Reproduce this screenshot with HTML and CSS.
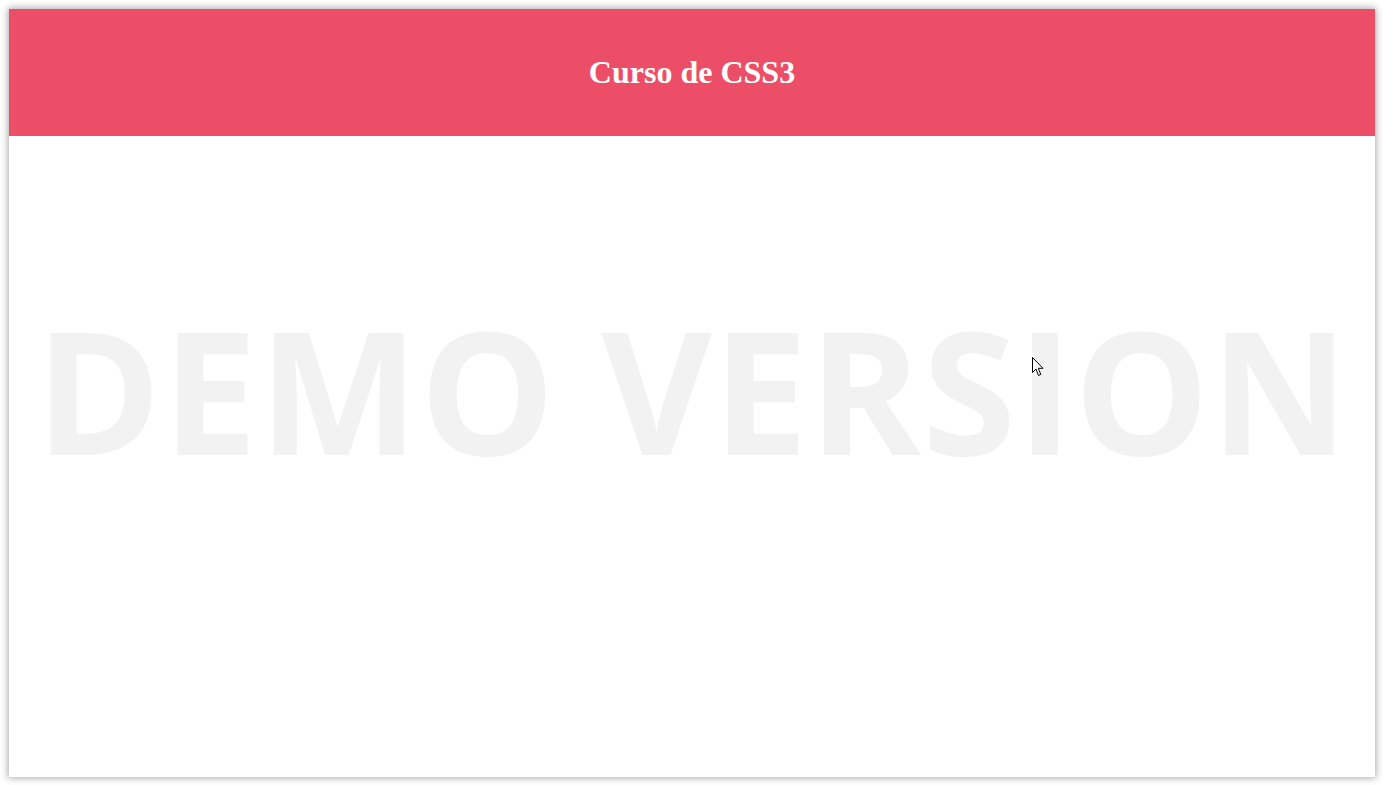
FILE: index.html
```html
<!DOCTYPE html>
<html lang="es">
<head>
<meta charset="utf-8">
<title>Curso de CSS3</title>
<link rel="stylesheet" href="styles.css">
</head>
<body>
<div class="frame">
  <header class="top">
    <h1 class="title">Curso de CSS3</h1>
  </header>
  <main class="content"></main>
  <div class="watermark">DEMO VERSION</div>
  <svg class="cursor" width="13" height="20" viewBox="0 0 13 20">
    <path d="M0.5 0.5 L0.5 15.5 L4 12 L6.5 18.5 L8.8 17.5 L6.3 11.3 L11 11.3 Z" fill="#fff" stroke="#000" stroke-width="1" stroke-linejoin="miter"/>
  </svg>
</div>
</body>
</html>
```
FILE: styles.css
```css
html, body {
  margin: 0;
  padding: 0;
  background: #fff;
}
body {
  padding: 9px 8px 8px 9px;
}
.frame {
  position: relative;
  width: 1366px;
  height: 768px;
  background: #fff;
  box-shadow: 0 0 7px 1px rgba(0,0,0,0.35);
  display: flex;
  flex-direction: column;
  overflow: hidden;
}
.top {
  height: 127px;
  background: #ec4e68;
  display: flex;
  align-items: center;
  justify-content: center;
}
.title {
  margin: 0;
  color: #fff;
  font-family: "Liberation Serif", "Times New Roman", serif;
  font-weight: bold;
  font-size: 32px;
  line-height: 1;
  position: relative;
  top: -1px;
}
.content {
  flex: 1;
}
.watermark {
  position: absolute;
  left: 0;
  right: 0;
  top: 295px;
  text-align: center;
  font-family: "Open Sans", "Noto Sans", sans-serif;
  font-weight: 700;
  font-size: 170px;
  line-height: 1;
  letter-spacing: 1px;
  text-indent: 1px;
  color: #f2f2f2;
  white-space: nowrap;
  pointer-events: none;
}
.cursor {
  position: absolute;
  left: 1023px;
  top: 348px;
}
```
